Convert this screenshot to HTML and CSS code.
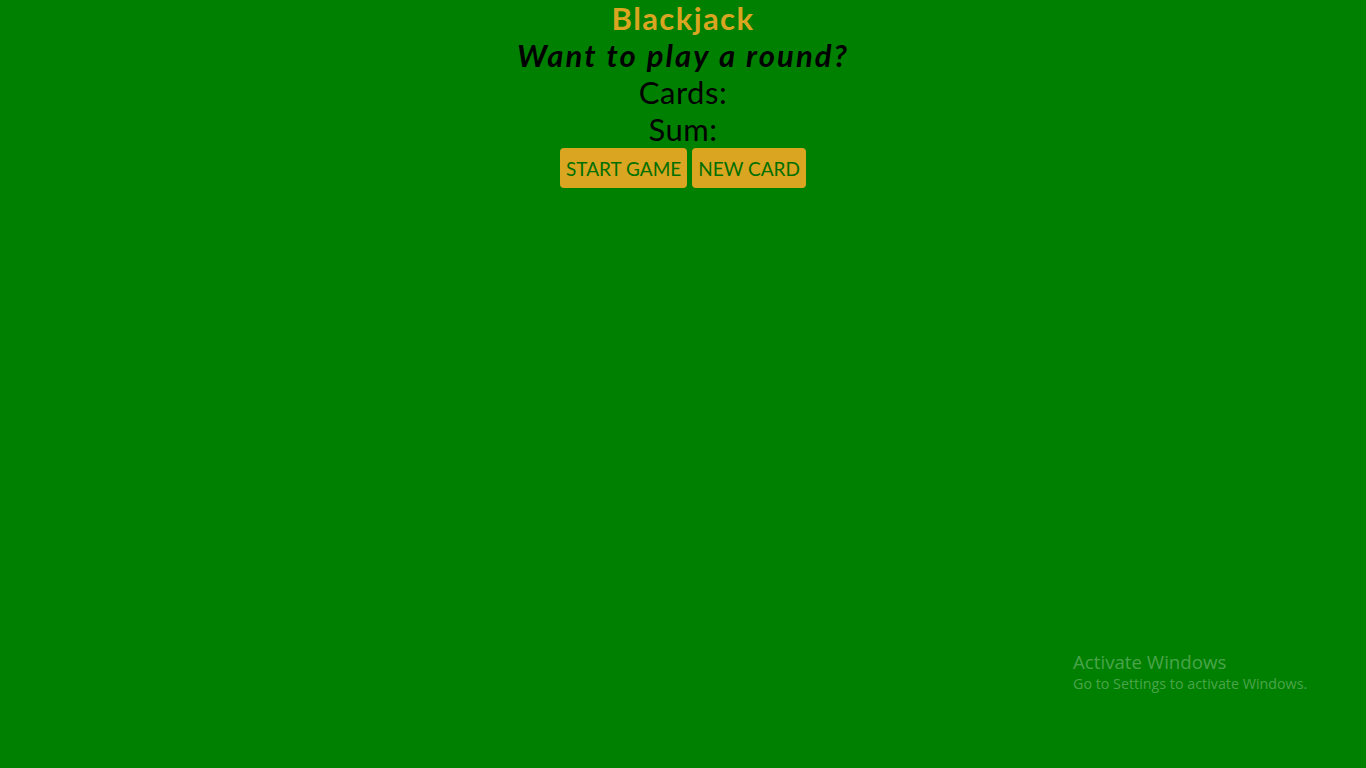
FILE: index.html
```html
<!DOCTYPE html>
<html>
<head>
<meta charset="utf-8">
<link rel="stylesheet" href="styles.css">
</head>
<body>
<main class="game">
  <h1 class="title">Blackjack</h1>
  <p class="message">Want to play a round?</p>
  <p class="line">Cards: </p>
  <p class="line">Sum: </p>
  <div class="actions">
    <button class="btn">START GAME</button>
    <button class="btn">NEW CARD</button>
  </div>
</main>
<div class="watermark">
  <div class="wm-title">Activate Windows</div>
  <div class="wm-sub">Go to Settings to activate Windows.</div>
</div>
</body>
</html>
```
FILE: styles.css
```css
html, body {
  margin: 0;
  padding: 0;
  height: 100%;
}
body {
  background: #008000;
  font-family: "Trebuchet MS", Lato, sans-serif;
  text-align: center;
  overflow: hidden;
}
.title {
  margin: 0;
  font-size: 31px;
  line-height: 37px;
  font-weight: bold;
  letter-spacing: 1.4px;
  color: #daa520;
}
.message {
  margin: 0;
  font-size: 31px;
  line-height: 37px;
  font-weight: bold;
  font-style: italic;
  letter-spacing: 2.1px;
  color: #000;
}
.line {
  margin: 0;
  font-size: 31px;
  line-height: 37px;
  letter-spacing: 0.5px;
  color: #000;
}
.actions {
  display: flex;
  justify-content: center;
  gap: 5px;
  margin-top: 0;
}
.btn {
  font-family: "Trebuchet MS", Lato, sans-serif;
  font-size: 19px;
  color: #016f01;
  background: #daa520;
  border: none;
  border-radius: 4px;
  height: 40px;
  padding: 0 6px;
}
.watermark {
  position: absolute;
  left: 1073px;
  top: 651px;
  text-align: left;
  font-family: "Open Sans", "Noto Sans", sans-serif;
  color: rgba(255,255,255,0.3);
}
.wm-title {
  font-size: 18.7px;
  line-height: 22px;
}
.wm-sub {
  font-size: 14.3px;
  line-height: 20px;
  margin-top: 1px;
}
```
